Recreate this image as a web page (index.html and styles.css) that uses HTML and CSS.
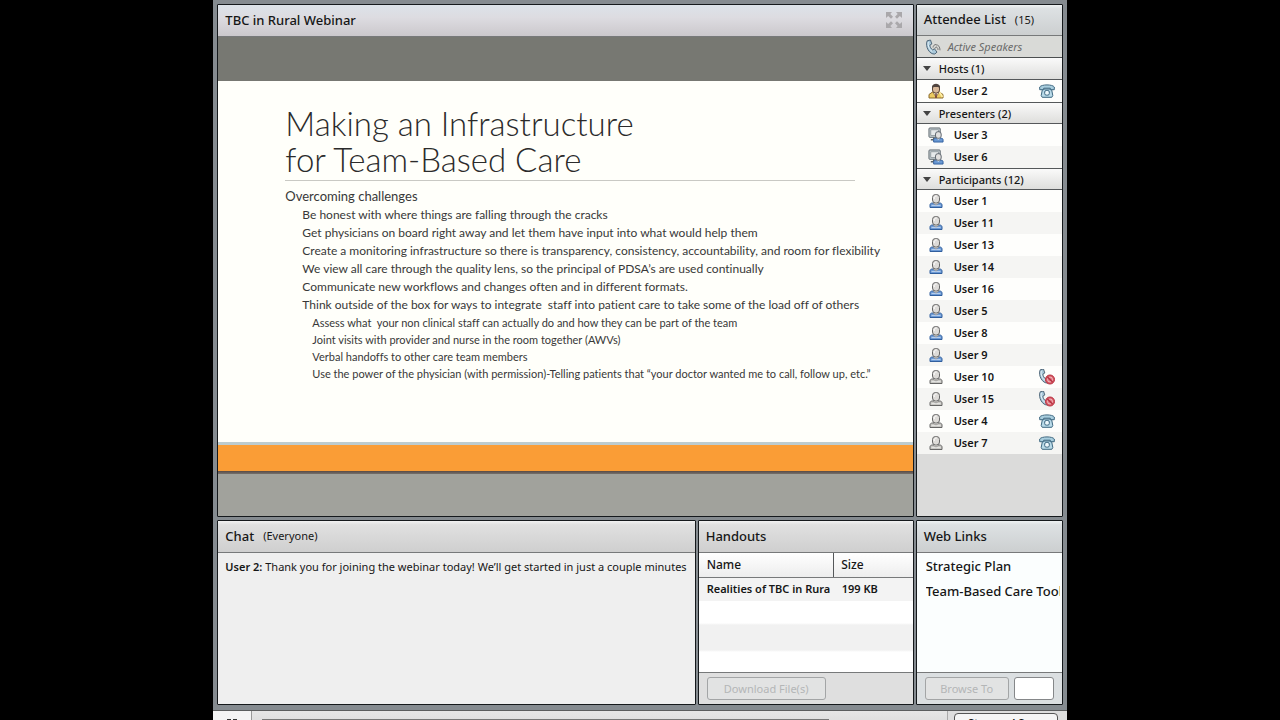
FILE: index.html
```html
<!DOCTYPE html>
<html lang="en">
<head>
<meta charset="utf-8">
<title>TBC in Rural Webinar</title>
<link rel="stylesheet" href="styles.css">
</head>
<body>
<svg class="defs" aria-hidden="true">
  <symbol id="person" viewBox="0 0 16 16">
    <path d="M2 14.500V12c0-1.200 1-2 2.300-2h7.400c1.300 0 2.300.8 2.300 2v2.500z" fill="var(--body)" stroke="var(--edge)"/>
    <path d="M3.500 12.500h9" stroke="#fff" stroke-opacity=".5"/>
    <path d="M5 10 8 12l3-2-1-1.500H6z" fill="#e6e4e0" stroke="#777" stroke-width=".6"/>
    <rect x="4.500" y="1.500" width="7" height="8.500" rx="3" fill="#dddbd8" stroke="#666"/>
    <path d="M6.200 6V4.200c.8-1 1.600-1 2.300-1" fill="none" stroke="#fff"/>
  </symbol>
  <symbol id="host" viewBox="0 0 16 16">
    <path d="M1 15v-3.500L4.500 9h7l3.500 2.500V15z" fill="#eccb62" stroke="#8b6a2c"/>
    <path d="M5 9.500 8 14l3-4.500z" fill="#f4eee0" stroke="#80613a" stroke-width=".7"/>
    <path d="M8 10.500V15" stroke="#6c3a35" stroke-width="1.500"/>
    <rect x="4.500" y="2" width="7" height="8" rx="3" fill="#d9b99a" stroke="#5c4638"/>
    <path d="M4 6V3.500C5-.2 11-.2 12 3.500V6l-1.500-2h-5z" fill="#51453f"/>
    <path d="m11.500 9 3 5" stroke="#fff0a8" stroke-width="1.500"/>
  </symbol>
  <symbol id="presenter" viewBox="0 0 17 17">
    <path d="M3 13.500h6M6 11v3" stroke="#586269" stroke-width="1.500"/>
    <rect x="1" y="1" width="12" height="10" rx="1" fill="#c3ccd0" stroke="#5e686e"/>
    <rect x="3" y="3" width="8" height="6" fill="#e5e9ea" stroke="#7b858a" stroke-width=".7"/>
    <path d="M6 16v-2.500c0-1 1-1.500 2-1.500h6c1.200 0 2 .5 2 1.500V16z" fill="#6998d2" stroke="#315f9e"/>
    <path d="m9 12 2 1.500 2-1.500-.5-1.500h-3z" fill="#e8edf2"/>
    <rect x="8" y="5" width="6" height="7" rx="2.500" fill="#e1e0df" stroke="#555e66"/>
  </symbol>
  <symbol id="desk-phone" viewBox="0 0 16 14">
    <path d="M3.500 5h9l1.300 6.500-1 1.800H3.200l-1-1.800z" fill="#b9dae8" stroke="#3e6881"/>
    <path d="M.7 5.700V3C2.500.2 13.500.2 15.300 3v2.700h-4V4.200H4.700v1.500z" fill="#a9cede" stroke="#3e6881"/>
    <rect x="5.700" y="6.500" width="4.600" height="4.600" rx="1.500" fill="#eef8fc" stroke="#3e6881"/>
  </symbol>
  <symbol id="handset" viewBox="0 0 16 16">
    <path d="M2.200 1.800 5.500 1l1.300 4-1.900 1.100c.2 2 1.100 3.600 2.600 4.700l2-.9 2.500 3.200-2.100 1.900C4.500 15.800-.2 7.500 2.200 1.800z" fill="#a8c8da" stroke="#51687a"/>
    <path d="M3.300 3c-.7 3.500.8 7.500 4 9.700" fill="none" stroke="#e7f3f9"/>
  </symbol>
  <symbol id="speaking" viewBox="0 0 16 16">
    <use href="#handset" width="16" height="16"/>
    <path d="M8 8.500c.2-2 1.500-3 3-3M9.800 9.800c.2-1.200.8-1.800 2-1.800M11 5.800c2.500 0 4 2 4 5.500M11.500 8.300c1 .2 1.500 1 1.500 2.700" fill="none" stroke="#777"/>
  </symbol>
  <symbol id="muted" viewBox="0 0 16 16">
    <use href="#handset" x="-1" y="-1" width="16" height="16"/>
    <circle cx="11" cy="10.500" r="4.500" fill="#d85b66" stroke="#b62f3f"/>
    <circle cx="11" cy="10.500" r="2.500" fill="#dd7680" stroke="#f6c9cc" stroke-width=".8"/>
    <path d="m8.500 8 5 5" stroke="#b62f3f" stroke-width="1.400"/>
  </symbol>
</svg>

<div class="screen">
  <div class="room">
    <div class="row row-top">
      <section class="pod share">
        <header class="pod-head">
          <h1 class="pod-title">TBC in Rural Webinar</h1>
          <button class="expand" type="button" aria-label="Full screen">
            <svg viewBox="0 0 18 18" width="18" height="18" fill="#aaa8ab"><path d="M1 1h6L5.300 3 8 5.700 6 7.800 3.200 5 1 7zM17 1v6l-2.200-2L12 7.800l-2-2.100L12.700 3 11 1zM1 17v-6l2.200 2L6 10.200l2 2.100L5.300 15 7 17zM17 17h-6l1.700-2-2.700-2.700 2-2.100 2.800 2.800 2.200-2z"/></svg>
          </button>
        </header>
        <div class="stage">
          <article class="slide">
            <h2 class="slide-title">Making an Infrastructure<br>for Team-Based Care</h2>
            <p class="lead">Overcoming challenges</p>
            <ul class="points">
              <li>Be honest with where things are falling through the cracks</li>
              <li>Get physicians on board right away and let them have input into what would help them</li>
              <li>Create a monitoring infrastructure so there is transparency, consistency, accountability, and room for flexibility</li>
              <li>We view all care through the quality lens, so the principal of PDSA’s are used continually</li>
              <li>Communicate new workflows and changes often and in different formats.</li>
              <li>Think outside of the box for ways to integrate&nbsp; staff into patient care to take some of the load off of others</li>
            </ul>
            <ul class="subpoints">
              <li>Assess what&nbsp; your non clinical staff can actually do and how they can be part of the team</li>
              <li>Joint visits with provider and nurse in the room together (AWVs)</li>
              <li>Verbal handoffs to other care team members</li>
              <li>Use the power of the physician (with permission)-Telling patients that “your doctor wanted me to call, follow up, etc.”</li>
            </ul>
          </article>
          <div class="band"></div>
        </div>
      </section>

      <section class="pod attendees">
        <header class="pod-head cool"><h2 class="pod-title">Attendee List</h2><span class="note">(15)</span></header>
        <div class="speakers"><svg class="icon"><use href="#speaking"/></svg><em>Active Speakers</em></div>
        <h3 class="group"><i class="tri"></i>Hosts (1)</h3>
        <ul class="people">
          <li><svg class="icon"><use href="#host"/></svg><span>User 2</span><svg class="icon"><use href="#desk-phone"/></svg></li>
        </ul>
        <h3 class="group"><i class="tri"></i>Presenters (2)</h3>
        <ul class="people">
          <li><svg class="icon"><use href="#presenter"/></svg><span>User 3</span></li>
          <li><svg class="icon"><use href="#presenter"/></svg><span>User 6</span></li>
        </ul>
        <h3 class="group"><i class="tri"></i>Participants (12)</h3>
        <ul class="people">
          <li><svg class="icon blue"><use href="#person"/></svg><span>User 1</span></li>
          <li><svg class="icon blue"><use href="#person"/></svg><span>User 11</span></li>
          <li><svg class="icon blue"><use href="#person"/></svg><span>User 13</span></li>
          <li><svg class="icon blue"><use href="#person"/></svg><span>User 14</span></li>
          <li><svg class="icon blue"><use href="#person"/></svg><span>User 16</span></li>
          <li><svg class="icon blue"><use href="#person"/></svg><span>User 5</span></li>
          <li><svg class="icon blue"><use href="#person"/></svg><span>User 8</span></li>
          <li><svg class="icon blue"><use href="#person"/></svg><span>User 9</span></li>
          <li><svg class="icon gray"><use href="#person"/></svg><span>User 10</span><svg class="icon"><use href="#muted"/></svg></li>
          <li><svg class="icon gray"><use href="#person"/></svg><span>User 15</span><svg class="icon"><use href="#muted"/></svg></li>
          <li><svg class="icon gray"><use href="#person"/></svg><span>User 4</span><svg class="icon"><use href="#desk-phone"/></svg></li>
          <li><svg class="icon gray"><use href="#person"/></svg><span>User 7</span><svg class="icon"><use href="#desk-phone"/></svg></li>
        </ul>
      </section>
    </div>

    <div class="row row-bottom">
      <section class="pod chat">
        <header class="pod-head"><h2 class="pod-title">Chat</h2><span class="note">(Everyone)</span></header>
        <p class="message"><b>User 2:</b> Thank you for joining the webinar today! We’ll get started in just a couple minutes</p>
      </section>
      <section class="pod handouts">
        <header class="pod-head"><h2 class="pod-title">Handouts</h2></header>
        <div class="files">
          <table class="file-table">
            <thead><tr><th class="name">Name</th><th>Size</th></tr></thead>
            <tbody><tr><td>Realities of TBC in Rura</td><td>199 KB</td></tr></tbody>
          </table>
        </div>
        <footer class="pod-foot"><button class="btn download" type="button" disabled>Download File(s)</button></footer>
      </section>
      <section class="pod weblinks">
        <header class="pod-head cool"><h2 class="pod-title">Web Links</h2></header>
        <nav class="links"><a href="#plan">Strategic Plan</a><a href="#toolkit">Team-Based Care Toolkit</a></nav>
        <footer class="pod-foot cool"><button class="btn browse" type="button" disabled>Browse To</button><input class="address" type="text" aria-label="Web address"></footer>
      </section>
    </div>

    <footer class="player">
      <button class="pause" type="button" aria-label="Pause"><i></i><i></i></button>
      <div class="track"><div class="progress"></div></div>
      <div class="recording"><button class="stop" type="button">Stop and Save</button></div>
    </footer>
  </div>
</div>
</body>
</html>
```
FILE: styles.css
```css
* { box-sizing: border-box; }

body {
  margin: 0;
  background: #000;
  color: #161616;
  font-family: "Noto Sans", "Open Sans", sans-serif;
  font-size: 11px;
}

h1, h2, h3, p, ul { margin: 0; padding: 0; font-weight: 400; }
ul { list-style: none; }
button, input { font: inherit; margin: 0; padding: 0; }
.defs { position: absolute; width: 0; height: 0; }

.screen {
  display: grid;
  grid-template-columns: 1fr 4fr 1fr;
  height: 100vh;
  overflow: hidden;
}

.room {
  grid-column: 2;
  display: grid;
  grid-template-rows: minmax(0, 11fr) minmax(0, 4fr) 10px;
  row-gap: 3px;
  min-width: 0;
  height: 100vh;
  padding-top: 4px;
  background: #858b90;
}

.row { display: grid; column-gap: 2px; padding: 0 4px; }
.row-top { grid-template-columns: minmax(0, 1fr) 147px; }
.row-bottom { grid-template-columns: minmax(0, 1fr) 216px 147px; margin-bottom: 2px; }

/* Pods */
.pod {
  display: flex;
  flex-direction: column;
  min-width: 0;
  overflow: hidden;
  border: 1px solid #15191c;
  border-radius: 1px;
}

.pod-head {
  display: flex;
  flex: none;
  align-items: center;
  gap: 9px;
  height: 32px;
  padding: 0 7px 2px;
  border-bottom: 1px solid #77797a;
  background: linear-gradient(#f2f2f2, #e0e0e0 12%, #cfcfcf);
}
.pod-head.cool { background: linear-gradient(#eef2f3, #dde1e3 12%, #cccfd0); }
.pod-title { font-size: 13px; font-weight: 500; line-height: 20px; }
.note { font-size: 11px; }

.expand {
  display: flex;
  margin-left: auto;
  margin-right: 3px;
  border: 0;
  background: none;
}

/* Shared slide */
.share .pod-head { background: linear-gradient(#dce2e9, #dddce1 40%, #cbc8cc); }
.stage { display: flex; flex: 1; flex-direction: column; padding-top: 44px; background: #777872; }
.slide {
  flex: 1;
  padding: 24px 22px 0 67px;
  background: #fffffa;
  color: #383838;
  font-family: Lato, sans-serif;
  font-variant-ligatures: none;
}
.slide-title {
  margin-right: 36px;
  padding-bottom: 3px;
  border-bottom: 1px solid #c9c9c4;
  color: #2b2b2b;
  font-size: 33px;
  font-weight: 300;
  line-height: 36px;
  white-space: nowrap;
}
.lead { margin-top: 5px; font-size: 13px; line-height: 20px; }
.points, .subpoints { white-space: nowrap; }
.points { padding-left: 17px; font-size: 12px; line-height: 18px; }
.subpoints { padding-left: 27px; font-size: 11px; line-height: 17px; }
.band {
  flex: none;
  height: 74px;
  border-top: 3px solid #bdccce;
  background: linear-gradient(#fa9d36 26px, #594b45 26px, #75706c 29px, #a1a29c 29px);
}

/* Attendees */
.attendees { background: #dbdbda; }
.attendees .pod-head { height: 31px; }
.icon { flex: none; width: 16px; height: 16px; }
.blue { --body: #6d9bd6; --edge: #315f9e; }
.gray { --body: #c9c8c4; --edge: #666; }
.speakers {
  display: flex;
  flex: none;
  align-items: center;
  gap: 7px;
  height: 22px;
  padding: 0 8px;
  border-bottom: 1px solid #4c4f50;
  background: #d9dad7;
  color: #6a6a6a;
}
.group {
  display: flex;
  flex: none;
  align-items: center;
  gap: 8px;
  height: 22px;
  padding: 0 6px;
  border-bottom: 1px solid #55585a;
  background: linear-gradient(#fafafa, #dededc);
  font-size: 11px;
  font-weight: 500;
}
.tri { border: 4px solid transparent; border-top: 5px solid #444; border-bottom: 0; }
.people li {
  display: flex;
  align-items: center;
  gap: 10px;
  height: 22px;
  padding: 0 7px 1px 11px;
  background: #fefefc;
  font-weight: 600;
}
.people li:nth-child(even) { background: #f5f5f3; }
.people span { flex: 1; }
.people + .group { border-top: 1px solid #55585a; }

/* Chat */
.chat { background: #efefef; }
.message { padding: 5px 7px; line-height: 18px; }
.message b { font-weight: 600; }

/* Handouts and links */
.files {
  flex: 1;
  overflow: hidden;
  background: linear-gradient(#fff 70px, #f1f1f1 72px, #f1f1f1 97px, #fff 99px);
}
.file-table {
  width: 100%;
  border-collapse: collapse;
  table-layout: fixed;
  text-align: left;
  white-space: nowrap;
}
.file-table th {
  height: 24px;
  padding: 0 7px 1px;
  border-bottom: 1px solid #77797a;
  background: linear-gradient(#fff, #ededed);
  font-size: 12px;
  font-weight: 500;
}
.file-table .name { width: 135px; padding-left: 8px; border-right: 1px solid #55585a; }
.file-table td { height: 24px; padding: 0 0 2px 8px; background: #f3f3f3; font-weight: 600; overflow: hidden; }
.pod-foot {
  display: flex;
  flex: none;
  align-items: center;
  gap: 5px;
  height: 32px;
  padding: 0 8px 1px;
  border-top: 1px solid #77797a;
  background: #dfdfdf;
}
.pod-foot.cool { background: #dbdfe1; }
.btn {
  height: 23px;
  border: 1px solid #a3a5a6;
  border-radius: 3px;
  background: #e2e3e3;
  color: #b4b6b7;
}
.download { width: 119px; }
.browse { flex: 1; }
.address { width: 40px; height: 23px; border: 1px solid #858789; border-radius: 3px; background: #fff; }
.links {
  display: flex;
  flex: 1;
  flex-direction: column;
  gap: 5px;
  padding: 3px 2px 0 9px;
  background: #fbfefe;
}
.links a {
  overflow: hidden;
  color: #161616;
  font-size: 13px;
  font-weight: 500;
  line-height: 20px;
  text-decoration: none;
  white-space: nowrap;
}

/* Player */
.player {
  display: flex;
  align-items: flex-start;
  height: 32px;
  border-top: 1px solid #5b5d5e;
  background: linear-gradient(#e6e6e6, #cfcfcf);
}
.pause {
  display: flex;
  justify-content: center;
  gap: 2px;
  width: 39px;
  height: 31px;
  padding-top: 8px;
  border: 0;
  border-right: 1px solid #999;
  background: #f4f4f4;
}
.pause i { width: 4px; height: 12px; background: #333; }
.track { flex: 1; height: 31px; padding: 8px 10px; }
.progress { width: 84%; height: 12px; background: #777; }
.recording { height: 31px; padding: 2px 9px 0 6px; border-left: 1px solid #aaa; background: #dedede; }
.stop { width: 104px; height: 20px; border: 1px solid #555; border-radius: 4px; background: #f5f5f5; color: #161616; font-weight: 600; line-height: 18px; }
```
